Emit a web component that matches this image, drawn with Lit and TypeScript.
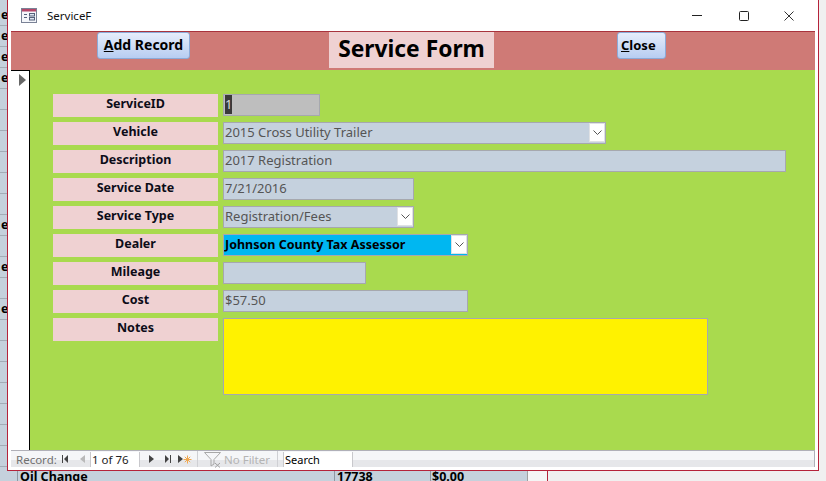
import { LitElement, html, css, svg } from "lit";
import { customElement } from "lit/decorators.js";

interface Field {
  label: string;
  width: number;
  value?: string;
  combo?: boolean;
  kind?: string;
}

const FIELDS: Field[] = [
  { label: "ServiceID", width: 97, value: "1", kind: "locked" },
  { label: "Vehicle", width: 383, value: "2015 Cross Utility Trailer", combo: true },
  { label: "Description", width: 563, value: "2017 Registration" },
  { label: "Service Date", width: 191, value: "7/21/2016" },
  { label: "Service Type", width: 191, value: "Registration/Fees", combo: true },
  { label: "Dealer", width: 245, value: "Johnson County Tax Assessor", combo: true, kind: "dealer" },
  { label: "Mileage", width: 143, value: "" },
  { label: "Cost", width: 245, value: "$57.50" },
  { label: "Notes", width: 485, value: "", kind: "notes" },
];

const E_ROWS = new Set([0, 1, 2, 3, 10, 12, 14]);

const chevron = svg`<svg width="9" height="5" viewBox="0 0 9 5"><path d="M0.5 0.5 L4.5 4.5 L8.5 0.5" fill="none" stroke="#555" stroke-width="1"/></svg>`;

@customElement("app-root")
export class AppRoot extends LitElement {
  static styles = css`
    :host {
      display: block;
      position: relative;
      width: 826px;
      height: 481px;
      overflow: hidden;
      background: #f0f0f0;
      font-family: "Noto Sans", "Open Sans", sans-serif;
      color: #000;
    }
    .desk { display: flex; height: 481px; }
    .table { width: 527px; padding-top: 5px; background: #c5d1dc; border-right: 1px solid #a0a0a0; box-sizing: content-box; }
    .row { display: flex; height: 20px; border-bottom: 1px solid #a3acb6; font-weight: 700; font-size: 12.5px; line-height: 20px; overflow: hidden; white-space: nowrap; }
    .c0 { width: 18px; box-sizing: border-box; padding-left: 1px; overflow: hidden; }
    .row.last .c0 { border-right: 1px solid #8f98a2; }
    .c1 { width: 316px; padding-left: 2px; box-sizing: border-box; }
    .c2 { width: 96px; padding-left: 2px; box-sizing: border-box; border-left: 1px solid transparent; }
    .c3 { width: 97px; padding-left: 1px; box-sizing: border-box; }
    .row.last .c2, .row.last .c3 { border-left: 1px solid #8f98a2; }
    .gutter { width: 19px; background: #f5f5f5; border-right: 1px solid #b5233a; }

    .window {
      position: absolute;
      left: 7px;
      top: 0;
      width: 812px;
      height: 471px;
      box-sizing: border-box;
      background: #fff;
      border: 1px solid #b5233a;
      border-top: none;
      display: flex;
      flex-direction: column;
    }
    .titlebar { height: 31px; flex: none; display: flex; align-items: center; }
    .appicon { margin-left: 13px; display: block; }
    .title { margin-left: 10px; font-size: 11.5px; color: #111; }
    .controls { margin-left: auto; display: flex; align-items: center; margin-right: 24px; }
    .controls svg { display: block; }
    .ctl-max { margin-left: 37px; }
    .ctl-close { margin-left: 35px; }

    .content { margin: 0 3px; flex: 1; display: flex; flex-direction: column; min-height: 0; }
    .header {
      height: 38px;
      flex: none;
      border-top: 1px solid #a8333d;
      background: #cf7a76;
      display: flex;
      align-items: flex-start;
      padding-left: 86px;
    }
    .btn {
      box-sizing: border-box;
      height: 27px;
      border: 1px solid #8caad8;
      border-radius: 3px;
      background: linear-gradient(#e6edfb, #b7cdf2);
      font-family: inherit;
      font-weight: 700;
      color: #000;
      padding: 0 0 2px;
      display: flex;
      align-items: center;
      justify-content: center;
    }
    .add { width: 93px; font-size: 14px; }
    .close { width: 49px; font-size: 13px; margin-left: 123px; justify-content: flex-start; padding-left: 3px; }
    .formtitle {
      width: 165px;
      height: 36px;
      margin-left: 139px;
      background: #efd1d2;
      font-size: 22.8px;
      font-weight: 700;
      line-height: 34px;
      text-align: center;
      white-space: nowrap;
    }
    .body { flex: 1; display: flex; min-height: 0; }
    .selector {
      width: 18px;
      box-sizing: content-box;
      flex: none;
      background: #fff;
      border-top: 1px solid #000;
      border-right: 1px solid #000;
    }
    .selector svg { display: block; margin: 3px 0 0 8px; }
    .detail {
      flex: 1;
      background: #a9da4e;
      padding: 24px 0 0 23px;
      display: flex;
      flex-direction: column;
      gap: 5px;
    }
    .frow { display: flex; gap: 5px; align-items: flex-start; }
    .lbl {
      width: 165px;
      height: 23px;
      flex: none;
      background: #efd1d2;
      font-size: 12.5px;
      font-weight: 700;
      line-height: 19px;
      text-align: center;
      color: #0c0c18;
    }
    .inp {
      box-sizing: border-box;
      height: 22px;
      border: 1px solid #a6a8ae;
      background: #c5d1de;
      font-size: 13px;
      line-height: 18px;
      color: #555;
      padding-left: 1px;
      display: flex;
      justify-content: space-between;
      white-space: nowrap;
      overflow: hidden;
    }
    .inp.locked { background: #bebebe; }
    .sel { background: #3a3a3a; color: #ddd; display: inline-block; width: 7px; height: 19px; line-height: 19px; text-align: center; }
    .inp.dealer { background: #00b7f1; color: #000; font-weight: 700; font-size: 12.5px; line-height: 19px; }
    .inp.notes { background: #fff200; height: 77px; }
    .drop {
      width: 16px;
      height: 19px;
      margin: 0 0 0 auto;
      background: #fff;
      border: 1px solid #dfe1e4;
      box-sizing: border-box;
      display: flex;
      align-items: center;
      justify-content: center;
      flex: none;
    }

    .nav {
      height: 17px;
      flex: none;
      box-sizing: border-box;
      margin-bottom: 3px;
      border-top: 1px solid #b0b0b8;
      border-right: 1px solid #b0b0b8;
      background: linear-gradient(#f5f6f8 0 9px, #e6e7ea 9px);
      display: flex;
      align-items: flex-start;
      font-size: 11.5px;
      line-height: 15px;
      color: #707070;
      white-space: nowrap;
    }
    .nav svg { display: block; flex: none; margin-top: 4px; }
    .rec { margin-left: 5px; width: 41px; padding-top: 1px; }
    .navbox {
      background: #fff;
      color: #222;
      height: 15px;
      margin-top: 1px;
      font-size: 11.5px;
      line-height: 15px;
      padding-left: 1px;
      box-sizing: border-box;
      flex: none;
      border-left: 1px solid #c8c8cc;
      border-right: 1px solid #c8c8cc;
    }
    .sep { width: 1px; height: 16px; background: #cfd0d4; flex: none; }
    .nofilter { color: #b4b4b4; margin-left: 2px; width: 53px; padding-top: 1px; }
    .i0 { margin-left: 5px; }
    .i1 { margin-left: 12px; }
    .box1 { width: 50px; margin-left: 5px; }
    .i2 { margin-left: 9px; }
    .i3 { margin-left: 11px; }
    .i4 { margin-left: 7px; }
    .s1 { margin-left: 5px; }
    .nav svg.i5 { margin-left: 6px; margin-top: 1px; }
    .box2 { width: 70px; margin-left: 5px; color: #000; font-size: 11px; padding-left: 1px; }
  `;

  private table() {
    const rows = Array.from({ length: 23 }, (_, i) => i);
    return html`<div class="table">
      ${rows.map((i) =>
        i === 22
          ? html`<div class="row last"><div class="c0"></div><div class="c1">Oil Change</div><div class="c2">17738</div><div class="c3">$0.00</div></div>`
          : html`<div class="row"><div class="c0">${E_ROWS.has(i) ? "e" : ""}</div></div>`
      )}
    </div>`;
  }

  private field(f: Field) {
    const val = f.kind === "locked" ? html`<span class="sel">${f.value}</span>` : html`<span>${f.value}</span>`;
    return html`<div class="frow">
      <div class="lbl">${f.label}</div>
      <div class="inp ${f.kind ?? ""}" style="width:${f.width}px">
        ${val}
        ${f.combo ? html`<span class="drop">${chevron}</span>` : ""}
      </div>
    </div>`;
  }

  render() {
    return html`
      <div class="desk">
        ${this.table()}
        <div class="gutter"></div>
      </div>
      <div class="window">
        <div class="titlebar">
          <svg class="appicon" width="16" height="15" viewBox="0 0 16 15">
            <rect x="0.5" y="0.5" width="15" height="14" fill="#f4f6fa" stroke="#7a8296"/>
            <rect x="1" y="1" width="14" height="2.5" fill="#b5476a"/>
            <path d="M3 6.5h3M3 9.5h3" stroke="#55607a" fill="none"/>
            <rect x="8.5" y="5.5" width="5" height="2.5" fill="#dfe6f2" stroke="#55607a"/>
            <rect x="8.5" y="9.5" width="5" height="2.5" fill="#dfe6f2" stroke="#55607a"/>
          </svg>
          <span class="title">ServiceF</span>
          <div class="controls">
            <svg width="10" height="10" viewBox="0 0 10 10"><path d="M0 4.5H10" stroke="#222"/></svg>
            <svg class="ctl-max" width="10" height="10" viewBox="0 0 10 10"><rect x="0.5" y="0.5" width="9" height="9" rx="1" fill="none" stroke="#222"/></svg>
            <svg class="ctl-close" width="10" height="10" viewBox="0 0 10 10"><path d="M0.5 0.5L9.5 9.5M9.5 0.5L0.5 9.5" stroke="#333" fill="none"/></svg>
          </div>
        </div>
        <div class="content">
          <div class="header">
            <button class="btn add"><span><u>A</u>dd Record</span></button>
            <div class="formtitle">Service Form</div>
            <button class="btn close"><span><u>C</u>lose</span></button>
          </div>
          <div class="body">
            <div class="selector">
              <svg width="7" height="12" viewBox="0 0 7 12"><path d="M0 0L7 6L0 12Z" fill="#666"/></svg>
            </div>
            <div class="detail">${FIELDS.map((f) => this.field(f))}</div>
          </div>
          <div class="nav">
            <span class="rec">Record:</span>
            <svg class="i0" width="6" height="8" viewBox="0 0 6 8"><path d="M0.5 0V8" stroke="#444"/><path d="M6 0V8L2 4Z" fill="#444"/></svg>
            <svg class="i1" width="5" height="8" viewBox="0 0 5 8"><path d="M5 0V8L0 4Z" fill="#b9b9b9"/></svg>
            <div class="navbox box1">1 of 76</div>
            <svg class="i2" width="5" height="8" viewBox="0 0 5 8"><path d="M0 0V8L5 4Z" fill="#444"/></svg>
            <svg class="i3" width="6" height="8" viewBox="0 0 6 8"><path d="M0 0V8L4 4Z" fill="#444"/><path d="M5.5 0V8" stroke="#444"/></svg>
            <svg class="i4" width="14" height="9" viewBox="0 0 14 9"><path d="M0 0V8L5 4Z" fill="#444"/><path d="M9.5 0.5V8.5M5.5 4.5H13.5M6.8 1.8L12.2 7.2M12.2 1.8L6.8 7.2" stroke="#f0a850" fill="none"/></svg>
            <div class="sep s1"></div>
            <svg class="i5" width="18" height="16" viewBox="0 0 18 16"><path d="M0.5 0.5H16.5L10 7.5V12L7 14V7.5Z" fill="none" stroke="#a8a8a8"/><path d="M11 11L16 15.5M16 11L11 15.5" stroke="#a0a0a0"/></svg>
            <span class="nofilter">No Filter</span>
            <div class="sep"></div>
            <div class="navbox box2">Search</div>
          </div>
        </div>
      </div>
    `;
  }
}
